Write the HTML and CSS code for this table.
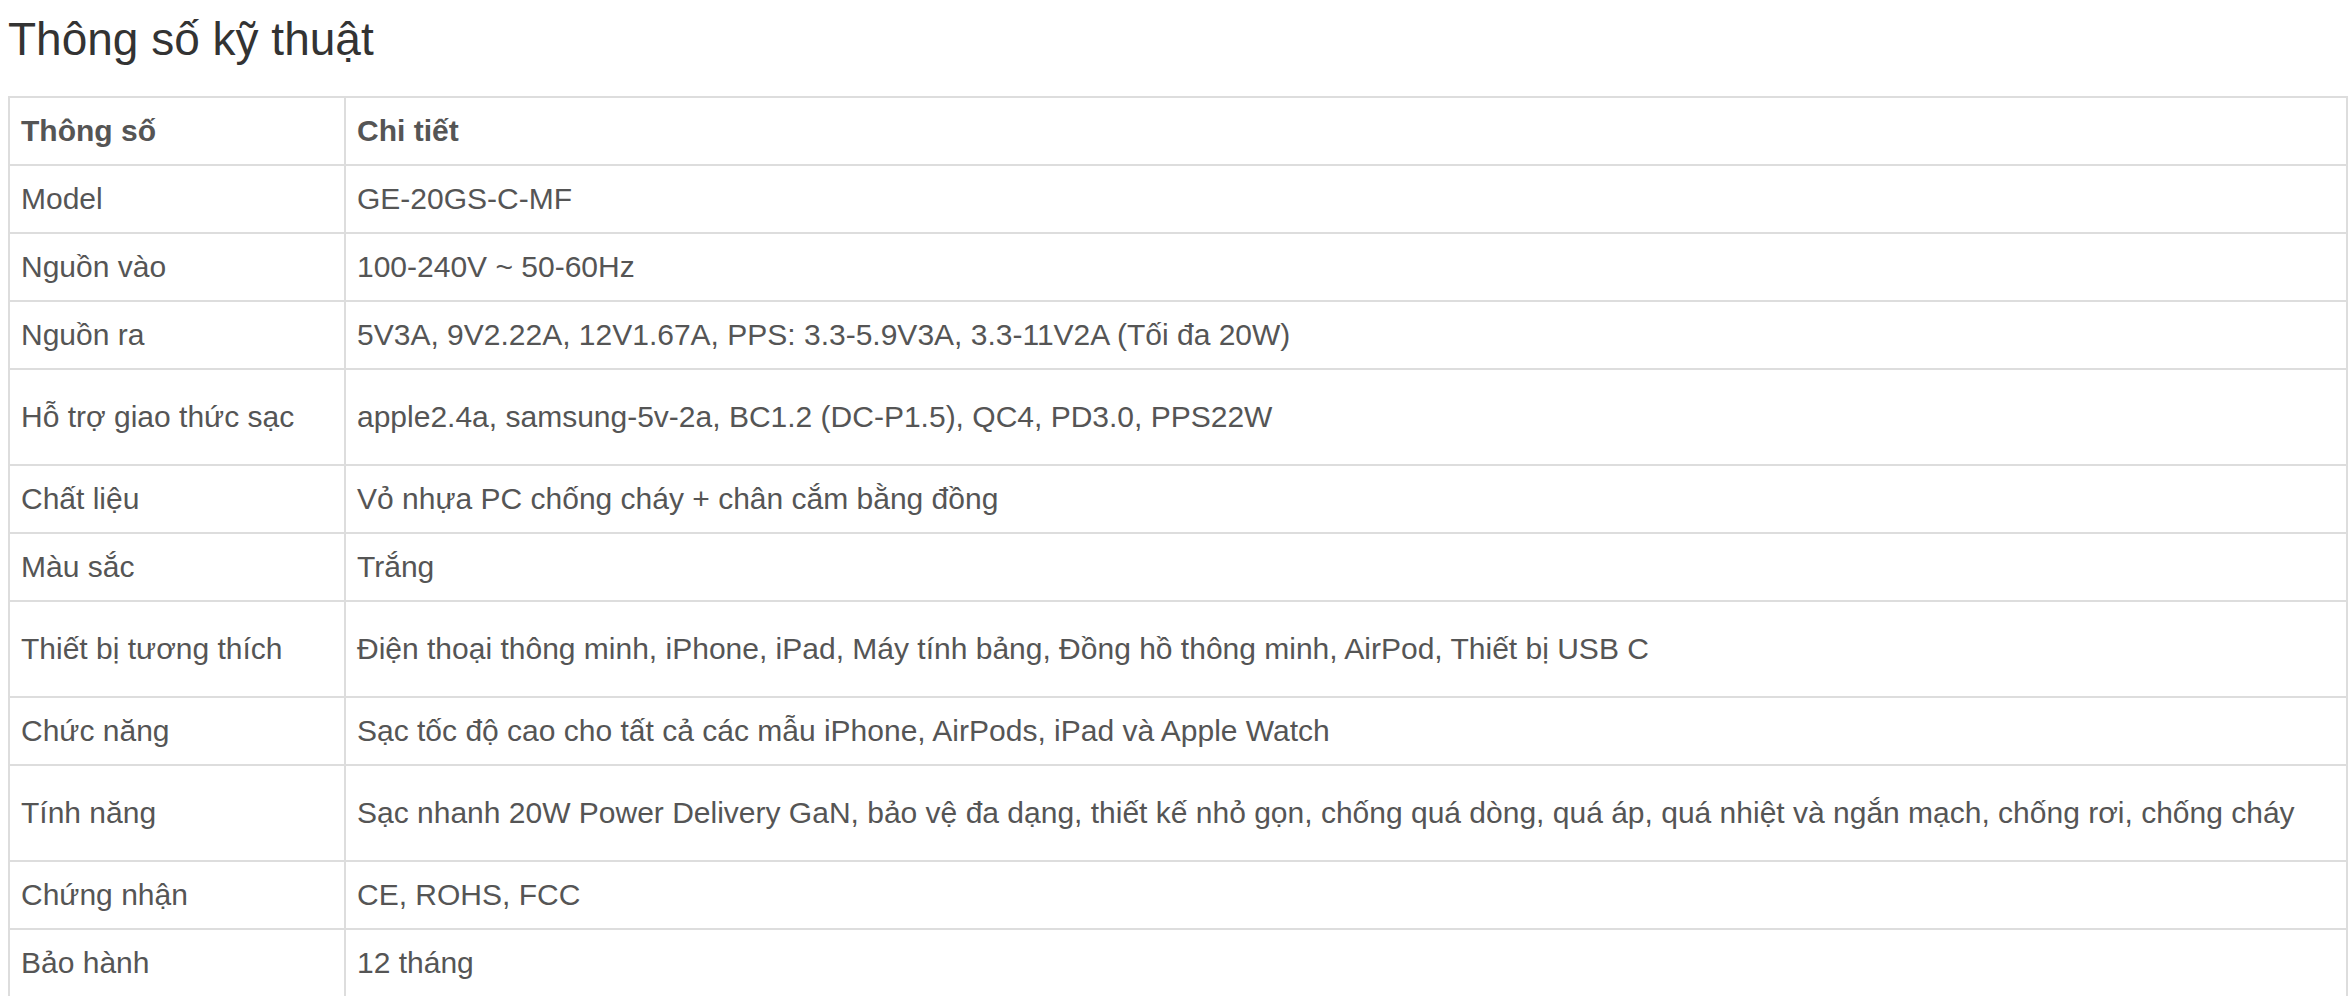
FILE: index.html
```html
<!DOCTYPE html>
<html lang="vi">
<head>
<meta charset="utf-8">
<title>Thông số kỹ thuật</title>
<link rel="stylesheet" href="styles.css">
</head>
<body>
<div class="page">
  <h2 class="title">Thông số kỹ thuật</h2>
  <table class="specs">
    <thead>
      <tr><th class="key">Thông số</th><th>Chi tiết</th></tr>
    </thead>
    <tbody>
      <tr><td class="key">Model</td><td>GE-20GS-C-MF</td></tr>
      <tr><td class="key">Nguồn vào</td><td>100-240V ~ 50-60Hz</td></tr>
      <tr><td class="key">Nguồn ra</td><td>5V3A, 9V2.22A, 12V1.67A, PPS: 3.3-5.9V3A, 3.3-11V2A (Tối đa 20W)</td></tr>
      <tr class="tall"><td class="key">Hỗ trợ giao thức sạc</td><td>apple2.4a, samsung-5v-2a, BC1.2 (DC-P1.5), QC4, PD3.0, PPS22W</td></tr>
      <tr><td class="key">Chất liệu</td><td>Vỏ nhựa PC chống cháy + chân cắm bằng đồng</td></tr>
      <tr><td class="key">Màu sắc</td><td>Trắng</td></tr>
      <tr class="tall"><td class="key">Thiết bị tương thích</td><td>Điện thoại thông minh, iPhone, iPad, Máy tính bảng, Đồng hồ thông minh, AirPod, Thiết bị USB C</td></tr>
      <tr><td class="key">Chức năng</td><td>Sạc tốc độ cao cho tất cả các mẫu iPhone, AirPods, iPad và Apple Watch</td></tr>
      <tr class="tall"><td class="key">Tính năng</td><td>Sạc nhanh 20W Power Delivery GaN, bảo vệ đa dạng, thiết kế nhỏ gọn, chống quá dòng, quá áp, quá nhiệt và ngắn mạch, chống rơi, chống cháy</td></tr>
      <tr><td class="key">Chứng nhận</td><td>CE, ROHS, FCC</td></tr>
      <tr><td class="key">Bảo hành</td><td>12 tháng</td></tr>
    </tbody>
  </table>
</div>
</body>
</html>
```

FILE: styles.css
```css
html, body {
  margin: 0;
  padding: 0;
  background: #ffffff;
}

body {
  font-family: "Liberation Sans", Arial, sans-serif;
  color: #555555;
}

.page {
  padding: 15px 4px 0 8px;
}

.title {
  margin: 0 0 31.5px 0;
  font-size: 46px;
  line-height: 49.5px;
  font-weight: 400;
  color: #333333;
}

.specs {
  width: 100%;
  table-layout: fixed;
  border-collapse: separate;
  border-spacing: 0;
  border: 1px solid #dddddd;
  font-size: 30px;
  line-height: 42px;
}

.specs th,
.specs td {
  border: 1px solid #dddddd;
  padding: 12px 11px;
  text-align: left;
  vertical-align: middle;
  white-space: nowrap;
}

.specs th {
  font-weight: 700;
  color: #555555;
}

.specs .key {
  width: 336px;
  box-sizing: border-box;
}

.specs tr.tall td {
  padding-top: 26px;
  padding-bottom: 26px;
}
```
